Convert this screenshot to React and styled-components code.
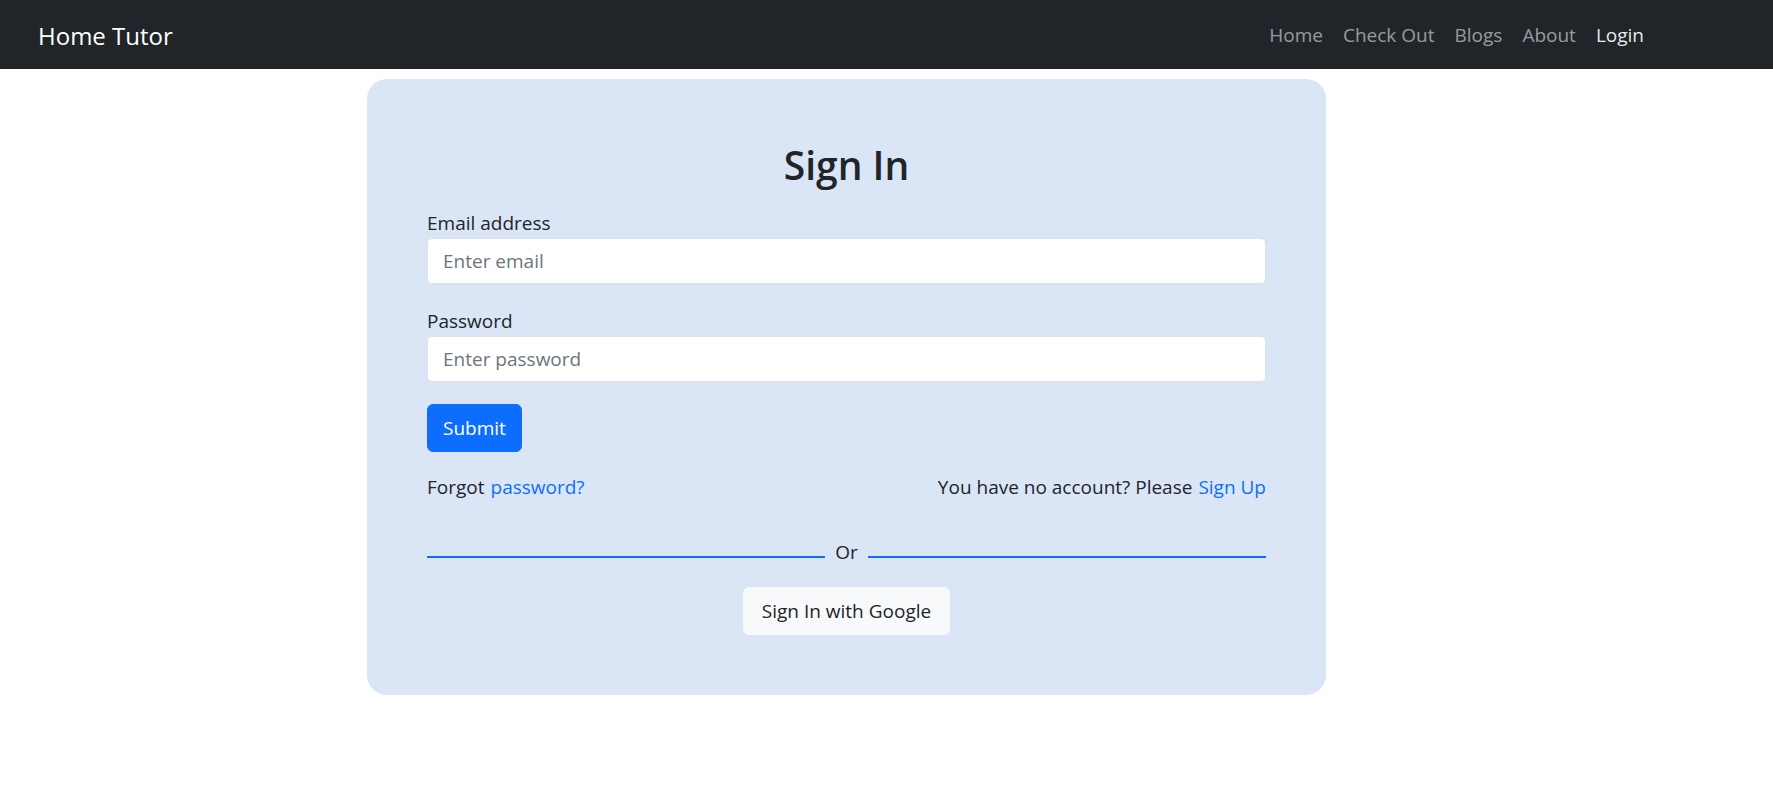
import styled, { createGlobalStyle } from "styled-components";

const GlobalStyle = createGlobalStyle`
  * {
    box-sizing: border-box;
  }
  body {
    margin: 0;
    background-color: #ffffff;
    color: #212529;
    font-family: "Segoe UI", "Open Sans", "Noto Sans", sans-serif;
    font-size: 19px;
    line-height: 1.5;
  }
`;

const Navbar = styled.nav`
  align-items: center;
  background-color: #212529;
  display: flex;
  height: 69px;
  justify-content: space-between;
  padding: 2px 119px 0 38px;
`;

const Brand = styled.a`
  color: #ffffff;
  font-size: 24px;
  line-height: 1.5;
  text-decoration: none;
`;

const NavList = styled.div`
  align-items: center;
  display: flex;
`;

const NavLink = styled.a`
  color: ${(props) => (props.active ? "rgba(255,255,255,0.92)" : "rgba(255,255,255,0.55)")};
  font-size: 19px;
  padding: 10px;
  text-decoration: none;
`;

const Main = styled.main`
  display: flex;
  padding: 10px 0 0 367px;
`;

const Card = styled.div`
  background-color: #dae6f6;
  border-radius: 20px;
  display: flex;
  flex-direction: column;
  padding: 63px 60px 60px;
  width: 959px;
`;

const Title = styled.h2`
  font-size: 39px;
  font-weight: 600;
  line-height: 1.2;
  margin: 0 0 19px;
  text-align: center;
`;

const Field = styled.div`
  display: flex;
  flex-direction: column;
  margin-bottom: 22px;
`;

const Label = styled.label`
  line-height: 30px;
`;

const Input = styled.input`
  background-color: #ffffff;
  border: 1px solid #dee2e6;
  border-radius: 5px;
  color: #212529;
  font-family: inherit;
  font-size: 19px;
  height: 46px;
  padding: 0 15px;
  width: 100%;
  &::placeholder {
    color: #6c757d;
  }
`;

const Button = styled.button`
  align-self: ${(props) => props.align || "flex-start"};
  background-color: ${(props) => (props.light ? "#f8f9fa" : "#0d6efd")};
  border: 1px solid ${(props) => (props.light ? "#f8f9fa" : "#0d6efd")};
  border-radius: 6px;
  color: ${(props) => (props.light ? "#212529" : "#ffffff")};
  font-family: inherit;
  font-size: 19px;
  height: 48px;
  padding: 0 ${(props) => (props.light ? "18px" : "15px")};
`;

const LinksRow = styled.div`
  display: flex;
  justify-content: space-between;
  margin-top: 21px;
`;

const Link = styled.a`
  color: #0d6efd;
  margin-left: 6px;
  text-decoration: none;
`;

const Divider = styled.div`
  align-items: center;
  display: flex;
  gap: 10px;
  margin: 37px 0 20px;
`;

const Line = styled.div`
  background-color: #0d6efd;
  flex: 1;
  height: 2px;
  margin-top: 8px;
`;

export default function App() {
  return (
    <>
      <GlobalStyle />
      <Navbar>
        <Brand href="#">Home Tutor</Brand>
        <NavList>
          <NavLink href="#">Home</NavLink>
          <NavLink href="#">Check Out</NavLink>
          <NavLink href="#">Blogs</NavLink>
          <NavLink href="#">About</NavLink>
          <NavLink href="#" active>
            Login
          </NavLink>
        </NavList>
      </Navbar>
      <Main>
        <Card>
          <Title>Sign In</Title>
          <Field>
            <Label>Email address</Label>
            <Input type="email" placeholder="Enter email" />
          </Field>
          <Field>
            <Label>Password</Label>
            <Input type="password" placeholder="Enter password" />
          </Field>
          <Button>Submit</Button>
          <LinksRow>
            <span>
              Forgot<Link href="#">password?</Link>
            </span>
            <span>
              You have no account? Please<Link href="#">Sign Up</Link>
            </span>
          </LinksRow>
          <Divider>
            <Line />
            <span>Or</span>
            <Line />
          </Divider>
          <Button light align="center">
            Sign In with Google
          </Button>
        </Card>
      </Main>
    </>
  );
}
